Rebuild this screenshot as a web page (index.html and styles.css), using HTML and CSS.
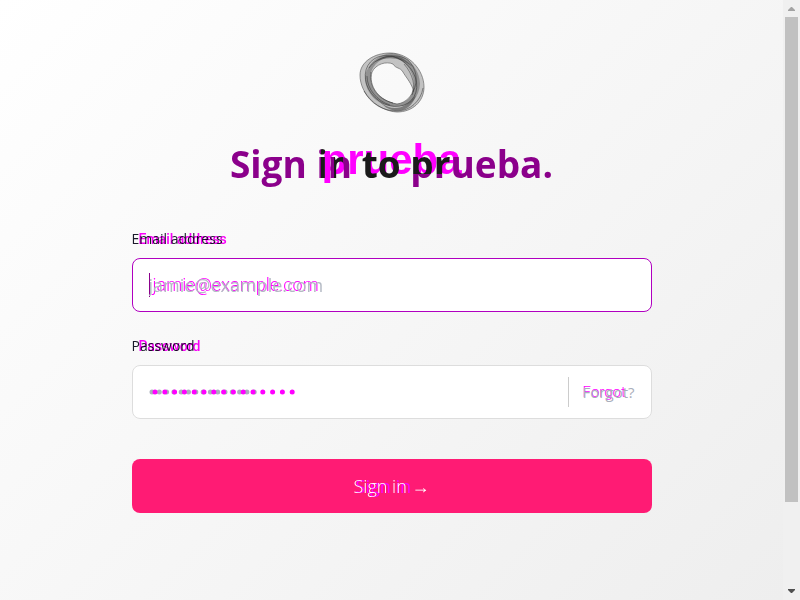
FILE: index.html
```html
<!DOCTYPE html>
<html lang="en">
<head>
<meta charset="utf-8">
<meta name="viewport" content="width=device-width, initial-scale=1">
<title>Sign in to prueba.</title>
<link rel="stylesheet" href="styles.css">
</head>
<body>
<main class="page">
  <form class="signin">
    <svg class="logo" viewBox="0 0 66 62" aria-hidden="true">
      <path fill="#777" fill-opacity=".42" stroke="#666" stroke-width=".7" fill-rule="evenodd" d="M1 23C1 10 15 1 31 1C50 1 65 18 65 35C65 50 53 60 38 60C20 59 1 43 1 23ZM13 20C9 34 20 49 38 52C47 51 54 43 54 37C51 29 46 24 44 20C41 15 37 17 34 12C27 9 17 12 13 20Z"/>
      <path fill="#222" fill-opacity=".3" fill-rule="evenodd" d="M6 27C7 12 20 2 33 1C48 3 61 17 61 32C60 46 52 54 40 54C22 57 7 43 6 27ZM11 26C11 40 23 49 38 52C50 51 55 42 55 31C54 19 46 8 34 5C22 5 12 13 11 26Z"/>
      <path fill="#333" fill-opacity=".5" d="M16 10C28 0 43 2 54 15C43 6 29 3 16 10ZM21 50C34 61 48 56 57 43C52 61 33 64 21 50Z"/>
      <g fill="none" stroke="#222" stroke-opacity=".5" stroke-width=".9">
        <ellipse cx="32" cy="29" rx="28" ry="23" transform="rotate(43 32 29)"/>
        <path d="M5 39C12 52 24 59 38 59C51 59 62 49 64 36M10 16C18 4 37 0 49 8C57 16 60 28 54 40M8 24C8 37 18 49 31 53M12 20C9 34 18 47 34 51M45 12C54 22 57 35 53 43"/>
      </g>
    </svg>
    <h1 class="title layers">
      <span class="title-ghost" aria-hidden="true">prueba</span>
      <span>Sign <span class="mixed">in</span> <span class="ink">to</span> <span class="mixed-end">pr</span>ueba.</span>
    </h1>
    <label class="label layers" for="email"><span>Email address</span><span class="label-ghost" aria-hidden="true">Email address</span></label>
    <div class="field focused">
      <span class="email-ghost" aria-hidden="true">jamie@example.com</span>
      <input id="email" type="email" placeholder="jamie@example.com">
    </div>
    <label class="label layers" for="password"><span>Password</span><span class="label-ghost" aria-hidden="true">Password</span></label>
    <div class="field">
      <input id="password" type="password" aria-label="Password">
      <svg class="dots" viewBox="0 0 150 6" aria-hidden="true">
        <path class="dots-front" d="M3 3h105"/>
        <path class="dots-ghost" d="M6 3h143"/>
      </svg>
      <a class="forgot layers" href="#"><span class="forgot-ghost" aria-hidden="true">Forgot</span><span>Forgot?</span></a>
    </div>
    <button class="submit" type="submit"><span class="layers"><span class="submit-ghost" aria-hidden="true">Sign in</span><span class="submit-text">Sign in →</span></span></button>
  </form>
</main>
<div class="scrollbar" aria-hidden="true">
  <svg class="arrow" viewBox="0 0 17 17"><path fill="#a3a3a3" d="M5 11h7v-1L9 7H8L5 10z"/></svg>
  <div class="track"><div class="thumb"></div></div>
  <svg class="arrow" viewBox="0 0 17 17"><path fill="#505050" d="M5 6h7v1L9 10H8L5 7z"/></svg>
</div>
</body>
</html>
```
FILE: styles.css
```css
* { box-sizing: border-box; }
body {
  margin: 0;
  min-height: 100vh;
  display: grid;
  grid-template-columns: 1fr 17px;
  font-family: "Open Sans", "Noto Sans", sans-serif;
  color: #1a1a2a;
  background: #f0f0f0;
}
.page {
  padding: 52px 24px 24px;
  background: linear-gradient(135deg, #fff, #eee);
}
.signin {
  display: flex;
  flex-direction: column;
  max-width: 520px;
  margin: 0 auto;
}
.layers { display: grid; }
.layers > span { grid-area: 1 / 1; }
.logo { width: 66px; height: 62px; align-self: center; }
.title {
  margin: 22px 0 37px;
  justify-items: center;
  font-size: 37px;
  line-height: 56px;
  font-weight: 700;
  white-space: nowrap;
  color: #8b008b;
}
.title-ghost {
  color: #f0f;
  font-family: "Liberation Sans", sans-serif;
  font-size: 42px;
  line-height: 48px;
}
.mixed {
  color: transparent;
  background: linear-gradient(90deg, #8b008b 15%, #1a1a1a 15% 30%, #8b008b 30% 50%, #1a1a1a 50% 75%, #8b008b 75%);
  background-clip: text;
}
.ink { color: #1a1a1a; }
.mixed-end {
  color: transparent;
  background: linear-gradient(#1a1a1a 70%, #8b008b 70%);
  background-clip: text;
}
.label {
  justify-content: start;
  font-size: 14px;
  line-height: 20px;
  margin-bottom: 9px;
}
.label-ghost {
  padding-left: 7px;
  color: #f0f;
  font-family: Roboto, sans-serif;
  font-weight: 500;
  mix-blend-mode: multiply;
}
.field {
  position: relative;
  display: flex;
  align-items: center;
  height: 54px;
  margin-bottom: 24px;
  background: #fff;
  border: 1px solid #ddd;
  border-radius: 8px;
}
.focused { border-color: #b000c0; }
.focused::before {
  content: "";
  position: absolute;
  left: 16px;
  width: 1px;
  height: 24px;
  background: #8b008b;
}
.field input {
  position: relative;
  flex: 1;
  min-width: 0;
  height: 52px;
  padding: 0 16px;
  border: 0;
  outline: 0;
  background: transparent;
  font: 18px "Open Sans", sans-serif;
}
.field input::placeholder { color: #b4bac4; opacity: 1; }
.email-ghost {
  position: absolute;
  left: 20px;
  color: #f0f;
  font: 300 18px/52px Roboto, sans-serif;
  pointer-events: none;
}
.dots { position: absolute; left: 16px; width: 150px; height: 6px; }
.dots path { fill: none; stroke-width: 5; stroke-linecap: round; }
.dots-ghost { stroke: #f0f; stroke-dasharray: 0 9.8; }
.dots-front { stroke: #a9aebb; stroke-dasharray: 0 7.3; }
.forgot {
  padding: 0 16px 0 14px;
  border-left: 1px solid #ccc;
  font-size: 15px;
  line-height: 30px;
  color: #a9aebb;
  text-decoration: none;
}
.forgot-ghost { color: #f0f; font-family: Roboto, sans-serif; font-weight: 300; }
.submit {
  height: 54px;
  margin-top: 16px;
  display: flex;
  align-items: center;
  justify-content: center;
  border: 0;
  border-radius: 8px;
  background: #ff1b74;
  color: #fff;
  font: 18px/28px "Open Sans", sans-serif;
}
.submit-ghost { color: #f0f; padding-left: 2px; text-align: left; }
.submit-text { font-weight: 300; }
.scrollbar { display: grid; grid-template-rows: 17px 1fr 17px; background: #f0f0f0; }
.arrow { width: 17px; height: 17px; }
.track { display: grid; grid-template-rows: 6fr 1fr; padding: 0 2px; }
.thumb { background: #c1c1c1; }
```
